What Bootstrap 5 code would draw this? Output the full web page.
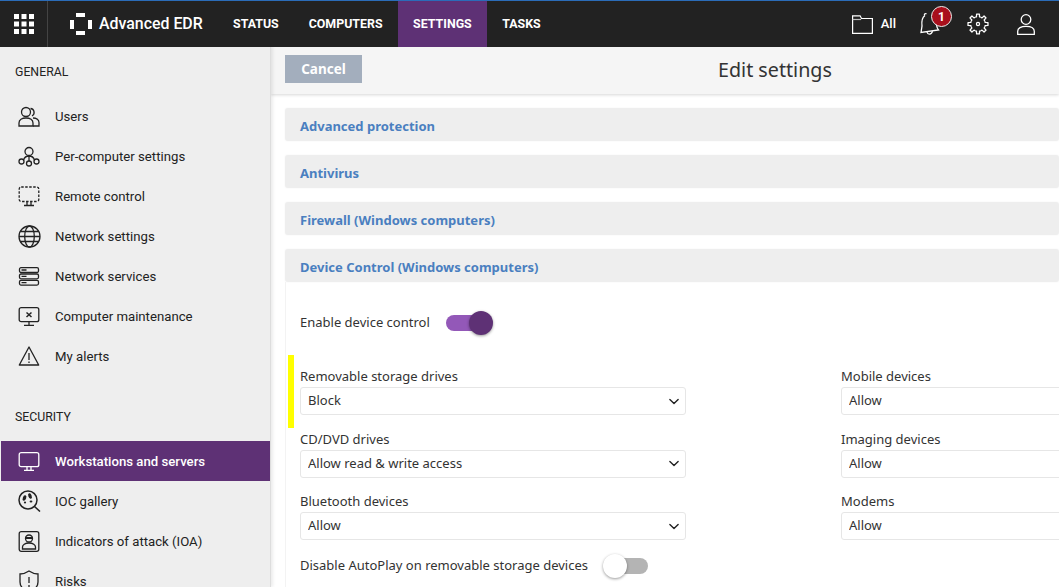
<!DOCTYPE html>
<html lang="en"><head><meta charset="utf-8"><title>Advanced EDR</title>
<link href="https://cdn.jsdelivr.net/npm/bootstrap@5.3.0/dist/css/bootstrap.min.css" rel="stylesheet">
<style>
html,body{height:100%;overflow:hidden}
body{font-family:"Noto Sans","Open Sans",sans-serif;font-size:13px;color:#333;background:#fff}
.shell{height:587px;width:1059px;overflow:hidden;display:flex;flex-direction:column}
.topbar{height:47px;flex:none;background:#222;border-top:1px solid #2b6cb8;color:#fff;font-family:"Roboto",sans-serif}
.gridbtn{width:48px;height:46px;border-right:1px solid #444}
.brand{margin-left:22px;width:148px;font-size:15.9px;font-weight:500;gap:7px}
.topnav{padding:0 15px;height:46px;font-size:12.4px;font-weight:700;color:#fff;text-decoration:none}
.topnav.on{background:#5e3175;padding:0 15.5px}
.notif{position:absolute;top:-6px;left:11px;width:21px;height:21px;border-radius:50%;background:#a80f1c;border:1px solid #eee;font-size:12px;font-weight:700}
.rightzone{padding-right:24px}
.ic-folder{margin-right:8px}
.lbl-all{font-size:13px;font-weight:500;margin-right:24px}
.ic-bell{margin-right:24px}
.ic-gear{margin-right:28px}
.side{width:271px;height:541px;flex:none;background:#eee;border-right:1px solid #ddd;box-shadow:2px 0 3px rgba(0,0,0,.08);font-family:"Roboto",sans-serif;font-size:13.2px;color:#222;margin-top:-1px;position:relative;z-index:2;padding-top:1px;overflow:hidden}
.sec-title{padding:16px 15px 0;height:49px;font-size:12.3px}
.sec-title.two{margin-top:21px;height:44px;padding-top:11px}
.sideitem{height:40px;padding-left:17px;gap:15px;color:#222;text-decoration:none;margin-left:1px}
.sideitem span{padding-top:2px}
.sideitem.on{background:#5e3175;color:#fff;font-weight:500}
.wide-ic{margin-right:-1px}
.pane{flex:1;min-width:0;background:#fff;position:relative}
.headbar{height:47px;background:#f5f5f5;box-shadow:0 1px 3px rgba(0,0,0,.16);position:relative;padding-left:14px}
.cancelbtn{width:77px;height:28px;background:#a3aebd;border-radius:0;border:0;color:#fff;font-weight:700;font-size:13.5px;padding:0;margin-top:8px}
.ptitle{position:absolute;left:447px;top:10px;font-size:19.7px;line-height:25px;color:#333}
.settings{padding:14px 0 0 14px;width:788px}
.sect{height:33px;background:#eee;padding:4px 0 0 15px;margin-bottom:14px;font-weight:700;color:#4a7fc0;font-size:13px;border-radius:3px;box-shadow:0 0 2px rgba(0,0,0,.06)}
.sect.open{margin-bottom:0}
.devbody{padding-left:14px;height:320px;border-left:1px solid #f3f3f3}
.enablerow{height:81px;gap:16px}
.togg{width:47px;height:24px;position:relative;flex:none}
.togg::before{content:"";position:absolute;left:0;right:3px;top:4px;height:16px;border-radius:8px;background:#9358b8}
.togg::after{content:"";position:absolute;right:0;top:0;width:24px;height:24px;border-radius:50%;background:#5e3175;box-shadow:0 1px 3px rgba(0,0,0,.4)}
.togg.off{width:45px}
.togg.off::before{background:#b4b4b4;left:2px;right:0}
.togg.off::after{left:0;right:auto;background:#fff;box-shadow:0 1px 3px rgba(0,0,0,.4)}
.fieldrow{display:grid;grid-template-columns:386px 386px;column-gap:155px;row-gap:0;margin-top:4px}
.field{height:62.5px}
.field label{display:block;line-height:18px;margin-bottom:2px;font-size:13px}
.pick{height:28px;font-size:13px;padding:0 24px 0 7px;border-color:#e6e6e6;border-radius:3px;color:#333;background-position:right 4px center;background-size:14px 11px;background-image:url("data:image/svg+xml,%3csvg xmlns='http://www.w3.org/2000/svg' viewBox='0 0 16 16'%3e%3cpath fill='none' stroke='%23222' stroke-linecap='round' stroke-linejoin='round' stroke-width='2' d='m2 5 6 6 6-6'/%3e%3c/svg%3e")}
.marked{position:relative}
.yellowbar{position:absolute;left:-12px;top:-12px;width:6px;height:73px;background:#ff0}
.autoplay{gap:15px;height:30px;margin-top:-4px}
</style></head>
<body>
<div class="shell">
<header class="topbar d-flex align-items-center">
  <div class="gridbtn d-flex align-items-center justify-content-center">
    <svg width="20" height="20" viewBox="0 0 20 20" fill="#fff"><rect width="5" height="5"/><rect x="7.500" width="5" height="5"/><rect x="15" width="5" height="5"/><rect y="7.500" width="5" height="5"/><rect x="7.500" y="7.500" width="5" height="5"/><rect x="15" y="7.500" width="5" height="5"/><rect y="15" width="5" height="5"/><rect x="7.500" y="15" width="5" height="5"/><rect x="15" y="15" width="5" height="5"/></svg>
  </div>
  <div class="brand d-flex align-items-center">
    <svg width="22" height="22" viewBox="0 0 22 22" fill="#fff"><rect x="6" width="9" height="4"/><rect x="6" y="18" width="9" height="4"/><rect y="7" width="4" height="9"/><rect x="18" y="7" width="4" height="9"/></svg>
    <span>Advanced EDR</span>
  </div>
  <a class="topnav d-flex align-items-center" href="#">STATUS</a>
  <a class="topnav d-flex align-items-center" href="#">COMPUTERS</a>
  <a class="topnav on d-flex align-items-center" href="#">SETTINGS</a>
  <a class="topnav d-flex align-items-center" href="#">TASKS</a>
  <div class="ms-auto d-flex align-items-center rightzone">
    <svg class="ic-folder" width="21" height="19" viewBox="0 0 21 19" fill="none" stroke="#fff" stroke-width="1.200"><path d="M.6 18.400V.8h7.500l1.400 2.700h10.900v14.900z"/><path d="M.6 4.500h8.500" stroke="#bbb"/></svg>
    <span class="lbl-all">All</span>
    <span class="position-relative d-inline-flex ic-bell">
      <svg width="23" height="24" viewBox="0 0 23 24" fill="none" stroke="#fff" stroke-width="1.300"><path d="M5 3.500C1.500 6 1.500 10 2 14L1 20.500 18.500 18C16 15 17 12 15 8"/><path d="M4.500 3.500c-.5-1.500 1-2.500 2-1.500"/><path d="M7 20c.5 2.800 4.500 3.200 5.500-.8"/></svg>
      <span class="notif d-flex align-items-center justify-content-center">1</span>
    </span>
    <svg class="ic-gear" width="22" height="22" viewBox="0 0 24 24" fill="none" stroke="#fff" stroke-width="1.400" stroke-linejoin="round"><path d="M8.940 4.610L10.340 4.170L10.470 1.110H13.530L13.660 4.170L15.060 4.610"/><path transform="rotate(45 12 12)" d="M8.940 4.610L10.340 4.170L10.470 1.110H13.530L13.660 4.170L15.060 4.610"/><path transform="rotate(90 12 12)" d="M8.940 4.610L10.340 4.170L10.470 1.110H13.530L13.660 4.170L15.060 4.610"/><path transform="rotate(135 12 12)" d="M8.940 4.610L10.340 4.170L10.470 1.110H13.530L13.660 4.170L15.060 4.610"/><path transform="rotate(180 12 12)" d="M8.940 4.610L10.340 4.170L10.470 1.110H13.530L13.660 4.170L15.060 4.610"/><path transform="rotate(225 12 12)" d="M8.940 4.610L10.340 4.170L10.470 1.110H13.530L13.660 4.170L15.060 4.610"/><path transform="rotate(270 12 12)" d="M8.940 4.610L10.340 4.170L10.470 1.110H13.530L13.660 4.170L15.060 4.610"/><path transform="rotate(315 12 12)" d="M8.940 4.610L10.340 4.170L10.470 1.110H13.530L13.660 4.170L15.060 4.610"/><circle cx="12" cy="12" r="1.700"/></svg>
    <svg width="18" height="21" viewBox="0 0 18 21" fill="none" stroke="#fff" stroke-width="1.300"><circle cx="9" cy="5.500" r="4.800"/><path d="M.7 20.300v-3C.7 14 4 12.300 9 12.300s8.300 1.700 8.300 5v3z"/></svg>
  </div>
</header>
<div class="d-flex flex-grow-1 overflow-hidden">
<nav class="side">
  <div class="sec-title">GENERAL</div>
  <a class="sideitem d-flex align-items-center" href="#"><svg width="22" height="21" viewBox="0 0 21 21" fill="none" stroke="currentColor" stroke-width="1.300"><circle cx="7.500" cy="6" r="4.500"/><path d="M12 2.500a4 4 0 0 1 1.500 7.500"/><path d="M.5 20v-3c0-3 3-5 7-5s7 2 7 5v3z"/><path d="M14.500 12c3 0 6 1.500 6 4.500V20h-6"/></svg><span>Users</span></a>
  <a class="sideitem d-flex align-items-center" href="#"><svg width="22" height="21" viewBox="0 0 21 21" fill="none" stroke="currentColor" stroke-width="1.300"><circle cx="10.500" cy="5.500" r="4"/><circle cx="3" cy="15.500" r="2.500"/><circle cx="10.500" cy="17.500" r="2.500"/><circle cx="18" cy="15.500" r="2.500"/><path d="M5 14c1-3 3-4 5.500-4s4.500 1 5.500 4M10.500 10v5"/></svg><span>Per-computer settings</span></a>
  <a class="sideitem d-flex align-items-center" href="#"><svg width="22" height="21" viewBox="0 0 21 21" fill="none" stroke="currentColor" stroke-width="1.300"><rect x=".7" y="1" width="19.600" height="14.500" rx="2" stroke-dasharray="2.500 1.500"/><path d="M8.500 16v3M12.500 16v3M5.500 19.500h10"/></svg><span>Remote control</span></a>
  <a class="sideitem d-flex align-items-center" href="#"><svg class="wide-ic" width="23" height="23" viewBox="0 0 23 23" fill="none" stroke="currentColor" stroke-width="1.300"><circle cx="11.500" cy="11.500" r="10.500"/><ellipse cx="11.500" cy="11.500" rx="4.800" ry="10.500"/><path d="M2.500 6.500h18M1 11.500h21M2.500 16.500h18"/></svg><span>Network settings</span></a>
  <a class="sideitem d-flex align-items-center" href="#"><svg width="22" height="19" viewBox="0 0 21 19" fill="none" stroke="currentColor" stroke-width="1.300"><rect x="1" y=".7" width="19" height="4.800" rx="1.500"/><rect x="1" y="7" width="19" height="4.800" rx="1.500"/><rect x="1" y="13.300" width="19" height="4.800" rx="1.500"/><path d="M3 3h5M3 9.400h5M3 15.700h5"/></svg><span>Network services</span></a>
  <a class="sideitem d-flex align-items-center" href="#"><svg width="22" height="19" viewBox="0 0 21 19" fill="none" stroke="currentColor" stroke-width="1.300"><rect x=".7" y=".7" width="19.600" height="14" rx="2"/><path d="M8 5.500l5 4.500M13 5.500l-5 4.500" stroke-width="1.500"/><path d="M10.500 15v3M5.500 18.300h10"/></svg><span>Computer maintenance</span></a>
  <a class="sideitem d-flex align-items-center" href="#"><svg width="22" height="20" viewBox="0 0 21 20" fill="none" stroke="currentColor" stroke-width="1.300"><path d="M10.500 1L.8 19h19.400z" stroke-linejoin="round"/><path d="M10.500 7v7M10.500 15.500v1.500"/></svg><span>My alerts</span></a>
  <div class="sec-title two">SECURITY</div>
  <a class="sideitem on d-flex align-items-center" href="#"><svg width="22" height="19" viewBox="0 0 21 19" fill="none" stroke="currentColor" stroke-width="1.300"><rect x=".7" y=".7" width="19.600" height="14" rx="2"/><path d="M8.500 15v3M12.500 15v3M5.500 18.300h10"/></svg><span>Workstations and servers</span></a>
  <a class="sideitem d-flex align-items-center" href="#"><svg class="wide-ic" width="23" height="22" viewBox="0 0 23 22" fill="none" stroke="currentColor" stroke-width="1.500"><circle cx="10" cy="10" r="9"/><path d="M16.500 16.500L22 21.500"/><ellipse cx="6.500" cy="8" rx="1.700" ry="2.800" fill="currentColor" stroke="none" transform="rotate(20 6.500 8)"/><ellipse cx="12" cy="6" rx="1.700" ry="2.800" fill="currentColor" stroke="none" transform="rotate(-20 12 6)"/><circle cx="7" cy="12.500" r="1.100" fill="currentColor" stroke="none"/><ellipse cx="13" cy="11.500" rx="1.400" ry="1.100" fill="currentColor" stroke="none"/></svg><span>IOC gallery</span></a>
  <a class="sideitem d-flex align-items-center" href="#"><svg width="22" height="21" viewBox="0 0 21 21" fill="none" stroke="currentColor" stroke-width="1.300"><rect x=".7" y=".7" width="19.600" height="19.600" rx="2"/><circle cx="10.500" cy="7.500" r="3.500"/><path d="M7 7h7" stroke-width="2"/><path d="M4 18v-2c0-2 2.500-4 6.500-4s6.500 2 6.500 4v2z"/></svg><span>Indicators of attack (IOA)</span></a>
  <a class="sideitem d-flex align-items-center" href="#"><svg width="22" height="23" viewBox="0 0 21 23" fill="none" stroke="currentColor" stroke-width="1.300"><path d="M10.500 1c3 2 6 3 9 3v8c0 5-4 8-9 10-5-2-9-5-9-10V4c3 0 6-1 9-3z"/><path d="M10.500 7v6M10.500 15v2"/></svg><span>Risks</span></a>
</nav>
<main class="pane">
  <div class="headbar">
    <button class="cancelbtn btn" type="button">Cancel</button>
    <div class="ptitle">Edit settings</div>
  </div>
  <div class="settings">
    <div class="sect d-flex align-items-center">Advanced protection</div>
    <div class="sect d-flex align-items-center">Antivirus</div>
    <div class="sect d-flex align-items-center">Firewall (Windows computers)</div>
    <div class="sect open d-flex align-items-center">Device Control (Windows computers)</div>
    <div class="devbody">
      <div class="enablerow d-flex align-items-center"><span>Enable device control</span><span class="togg"></span></div>
      <div class="fieldrow">
        <div class="field marked"><span class="yellowbar"></span><label>Removable storage drives</label><select class="form-select pick"><option>Block</option></select></div>
        <div class="field"><label>Mobile devices</label><select class="form-select pick"><option>Allow</option></select></div>
        <div class="field"><label>CD/DVD drives</label><select class="form-select pick"><option>Allow read &amp; write access</option></select></div>
        <div class="field"><label>Imaging devices</label><select class="form-select pick"><option>Allow</option></select></div>
        <div class="field"><label>Bluetooth devices</label><select class="form-select pick"><option>Allow</option></select></div>
        <div class="field"><label>Modems</label><select class="form-select pick"><option>Allow</option></select></div>
      </div>
      <div class="autoplay d-flex align-items-center"><span>Disable AutoPlay on removable storage devices</span><span class="togg off"></span></div>
    </div>
  </div>
</main>
</div>
</div>
<script src="https://cdn.jsdelivr.net/npm/bootstrap@5.3.0/dist/js/bootstrap.bundle.min.js"></script>
</body></html>
